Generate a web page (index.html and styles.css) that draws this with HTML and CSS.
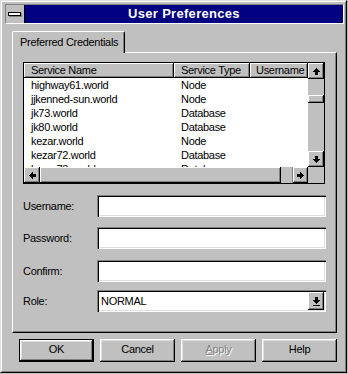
FILE: index.html
```html
<!DOCTYPE html>
<html>
<head>
<meta charset="utf-8">
<title>User Preferences</title>
<link rel="stylesheet" href="styles.css">
</head>
<body>
<div class="win">
  <div class="frame">
    <div class="titlebar">
      <div class="sysmenu"><span class="dash"></span></div>
      <div class="caption">User Preferences</div>
    </div>
    <div class="content">
      <div class="tabs">
        <div class="tab">Preferred Credentials</div>
        <div class="tab-fill"></div>
      </div>
      <div class="panel">
        <div class="list">
          <div class="list-main">
            <div class="list-head">
              <div class="hcell">Service Name</div>
              <div class="hcell">Service Type</div>
              <div class="hcell">Username</div>
            </div>
            <div class="list-row"><span>highway61.world</span><span>Node</span><span></span></div>
            <div class="list-row"><span>jjkenned-sun.world</span><span>Node</span><span></span></div>
            <div class="list-row"><span>jk73.world</span><span>Database</span><span></span></div>
            <div class="list-row"><span>jk80.world</span><span>Database</span><span></span></div>
            <div class="list-row"><span>kezar.world</span><span>Node</span><span></span></div>
            <div class="list-row"><span>kezar72.world</span><span>Database</span><span></span></div>
            <div class="list-row"><span>kezar73.world</span><span>Database</span><span></span></div>
          </div>
          <div class="vscroll">
            <div class="sbtn"><svg class="arrow" width="7" height="7" viewBox="0 0 7 7"><path d="M3 0h1v1h1v1h1v1h1v1H5v3H2V4H0V3h1V2h1V1h1z"/></svg></div>
            <div class="vtrack"><div class="vthumb"></div></div>
            <div class="sbtn"><svg class="arrow rot180" width="7" height="7" viewBox="0 0 7 7"><path d="M3 0h1v1h1v1h1v1h1v1H5v3H2V4H0V3h1V2h1V1h1z"/></svg></div>
          </div>
          <div class="hscroll">
            <div class="sbtn"><svg class="arrow rotl" width="7" height="7" viewBox="0 0 7 7"><path d="M3 0h1v1h1v1h1v1h1v1H5v3H2V4H0V3h1V2h1V1h1z"/></svg></div>
            <div class="hthumb"></div>
            <div class="htrack"></div>
            <div class="sbtn narrow"><svg class="arrow rotr" width="7" height="7" viewBox="0 0 7 7"><path d="M3 0h1v1h1v1h1v1h1v1H5v3H2V4H0V3h1V2h1V1h1z"/></svg></div>
          </div>
          <div class="corner"></div>
        </div>

        <div class="form">
          <div class="frow r1"><label>Username:</label><div class="field"></div></div>
          <div class="frow r2"><label>Password:</label><div class="field"></div></div>
          <div class="frow r3"><label>Confirm:</label><div class="field"></div></div>
          <div class="frow r4"><label>Role:</label>
            <div class="field combo">
              <span class="combo-text">NORMAL</span>
              <span class="combo-btn"><svg class="arrow" width="7" height="9" viewBox="0 0 7 9"><path d="M2 0h3v3h2v1H6v1H5v1H4v1H3V6H2V5H1V4H0V3h2z"/><rect x="0" y="8" width="7" height="1"/></svg></span>
            </div>
          </div>
        </div>
      </div>
      <div class="buttons">
        <div class="btn default">OK</div>
        <div class="btn">Cancel</div>
        <div class="btn disabled"><u>A</u>pply</div>
        <div class="btn">Help</div>
      </div>
    </div>
  </div>
</div>
</body>
</html>
```

FILE: styles.css
```css
* { box-sizing: border-box; }
html, body { margin: 0; padding: 0; }
body {
  background: #c0c0c0;
  width: 348px;
  height: 374px;
  overflow: hidden;
  font-family: "Liberation Sans", Arial, sans-serif;
  font-size: 11px;
  letter-spacing: -0.3px;
  color: #000;
}

.win {
  width: 347px;
  height: 373px;
  border: 1px solid;
  border-color: #dfdfdf #000 #000 #dfdfdf;
}
.frame {
  height: 100%;
  border: 1px solid;
  border-color: #fff #808080 #808080 #fff;
  padding: 2px 1px 1px 3px;
  display: flex;
  flex-direction: column;
}

.titlebar {
  height: 20px;
  display: flex;
  border: 1px solid;
  border-color: #808080 #fff #fff #808080;
}
.sysmenu {
  width: 19px;
  border-right: 1px solid #000;
  display: flex;
  align-items: center;
  justify-content: center;
  padding-right: 1px;
}
.dash {
  width: 13px;
  height: 4px;
  border: 1px solid #000;
  background: #fff;
  box-shadow: 1px 1px 0 #808080;
}
.caption {
  flex: 1;
  background: #000080;
  color: #fff;
  font-weight: bold;
  font-size: 13px;
  letter-spacing: 0.3px;
  text-align: center;
  line-height: 18px;
}

.content {
  flex: 1;
  padding: 7px 7px 0 7px;
  display: flex;
  flex-direction: column;
}

.tabs {
  display: flex;
  height: 22px;
}
.tab {
  width: 113px;
  height: 22px;
  border-top: 1px solid #fff;
  border-left: 1px solid #fff;
  border-right: 1px solid #000;
  border-radius: 2px 2px 0 0;
  box-shadow: inset -1px 0 0 #808080;
  padding-left: 7px;
  line-height: 20px;
  white-space: nowrap;
}
.tab-fill {
  flex: 1;
  align-self: flex-end;
  border-bottom: 1px solid #fff;
  border-right: 1px solid #000;
}

.panel {
  width: 325px;
  height: 280px;
  border-left: 1px solid #fff;
  border-right: 1px solid #000;
  border-bottom: 1px solid #000;
  box-shadow: inset -1px -1px 0 #808080;
  padding: 9px 0 0 10px;
}

.list {
  width: 302px;
  height: 122px;
  border: 1px solid #000;
  display: grid;
  grid-template-columns: 284px 16px;
  grid-template-rows: 104px 16px;
}
.list-main {
  background: #fff;
  overflow: hidden;
}
.list-head {
  display: grid;
  grid-template-columns: 150px 76px 58px;
}
.hcell {
  height: 15px;
  line-height: 14px;
  background: #c0c0c0;
  border-right: 1px solid #000;
  border-bottom: 1px solid #000;
  box-shadow: inset 1px 1px 0 #fff, inset -1px -1px 0 #808080;
  padding-left: 7px;
  white-space: nowrap;
  overflow: hidden;
}
.hcell:last-child { padding-left: 6px; }
.list-row {
  display: grid;
  grid-template-columns: 150px 76px 58px;
  height: 14px;
  line-height: 14px;
}
.list-row span {
  padding-left: 7px;
  white-space: nowrap;
  overflow: hidden;
}

.sbtn {
  width: 16px;
  height: 16px;
  background: #c0c0c0;
  display: flex;
  align-items: center;
  justify-content: center;
  box-shadow: inset -1px -1px 0 #000, inset 1px 1px 0 #fff, inset -2px -2px 0 #808080;
}
.sbtn.narrow { width: 15px; }
.arrow { display: block; fill: #000; shape-rendering: crispEdges; }
.rot180 { transform: rotate(180deg); }
.rotl { transform: rotate(-90deg); }
.rotr { transform: rotate(90deg); }

.vscroll {
  display: flex;
  flex-direction: column;
  background: #c0c0c0;
}
.vtrack {
  flex: 1;
  padding-top: 16px;
}
.vthumb {
  height: 8px;
  background: #c0c0c0;
  box-shadow: inset -1px -1px 0 #000, inset 1px 1px 0 #fff, inset -2px -2px 0 #808080;
}
.hscroll {
  display: flex;
  background: #c0c0c0;
}
.hthumb {
  width: 241px;
  height: 16px;
  box-shadow: inset -1px -1px 0 #000, inset 1px 1px 0 #fff, inset -2px -2px 0 #808080;
}
.htrack {
  flex: 1;
  border-right: 1px solid #808080;
}
.corner { background: #c0c0c0; }

.form {
  margin-top: 11px;
  display: flex;
  flex-direction: column;
}
.frow {
  display: grid;
  grid-template-columns: 74px 229px;
  align-items: center;
  height: 22px;
}
.r2 { margin-top: 10px; }
.r3 { margin-top: 11px; }
.r4 { margin-top: 8px; }
.field {
  height: 22px;
  background: #fff;
  box-shadow: inset 1px 1px 0 #808080, inset 2px 2px 0 #000, inset -1px -1px 0 #fff, inset -2px -2px 0 #dfdfdf;
}
.combo {
  display: flex;
  align-items: center;
  padding: 2px;
}
.combo-text {
  flex: 1;
  padding-left: 2px;
}
.combo-btn {
  width: 16px;
  height: 18px;
  background: #c0c0c0;
  display: flex;
  align-items: center;
  justify-content: center;
  box-shadow: inset -1px -1px 0 #000, inset 1px 1px 0 #fff, inset -2px -2px 0 #808080;
}

.buttons {
  margin-top: 6px;
  display: flex;
  justify-content: flex-end;
  gap: 6px;
  width: 325px;
}
.btn {
  width: 75px;
  height: 23px;
  line-height: 21px;
  text-align: center;
  background: #c0c0c0;
  box-shadow: inset -1px -1px 0 #000, inset 1px 1px 0 #fff, inset -2px -2px 0 #808080, inset 2px 2px 0 #dfdfdf;
}
.btn.default {
  border: 1px solid #000;
  line-height: 19px;
}
.btn.disabled {
  color: #808080;
  text-shadow: 1px 1px 0 #fff;
}
```
